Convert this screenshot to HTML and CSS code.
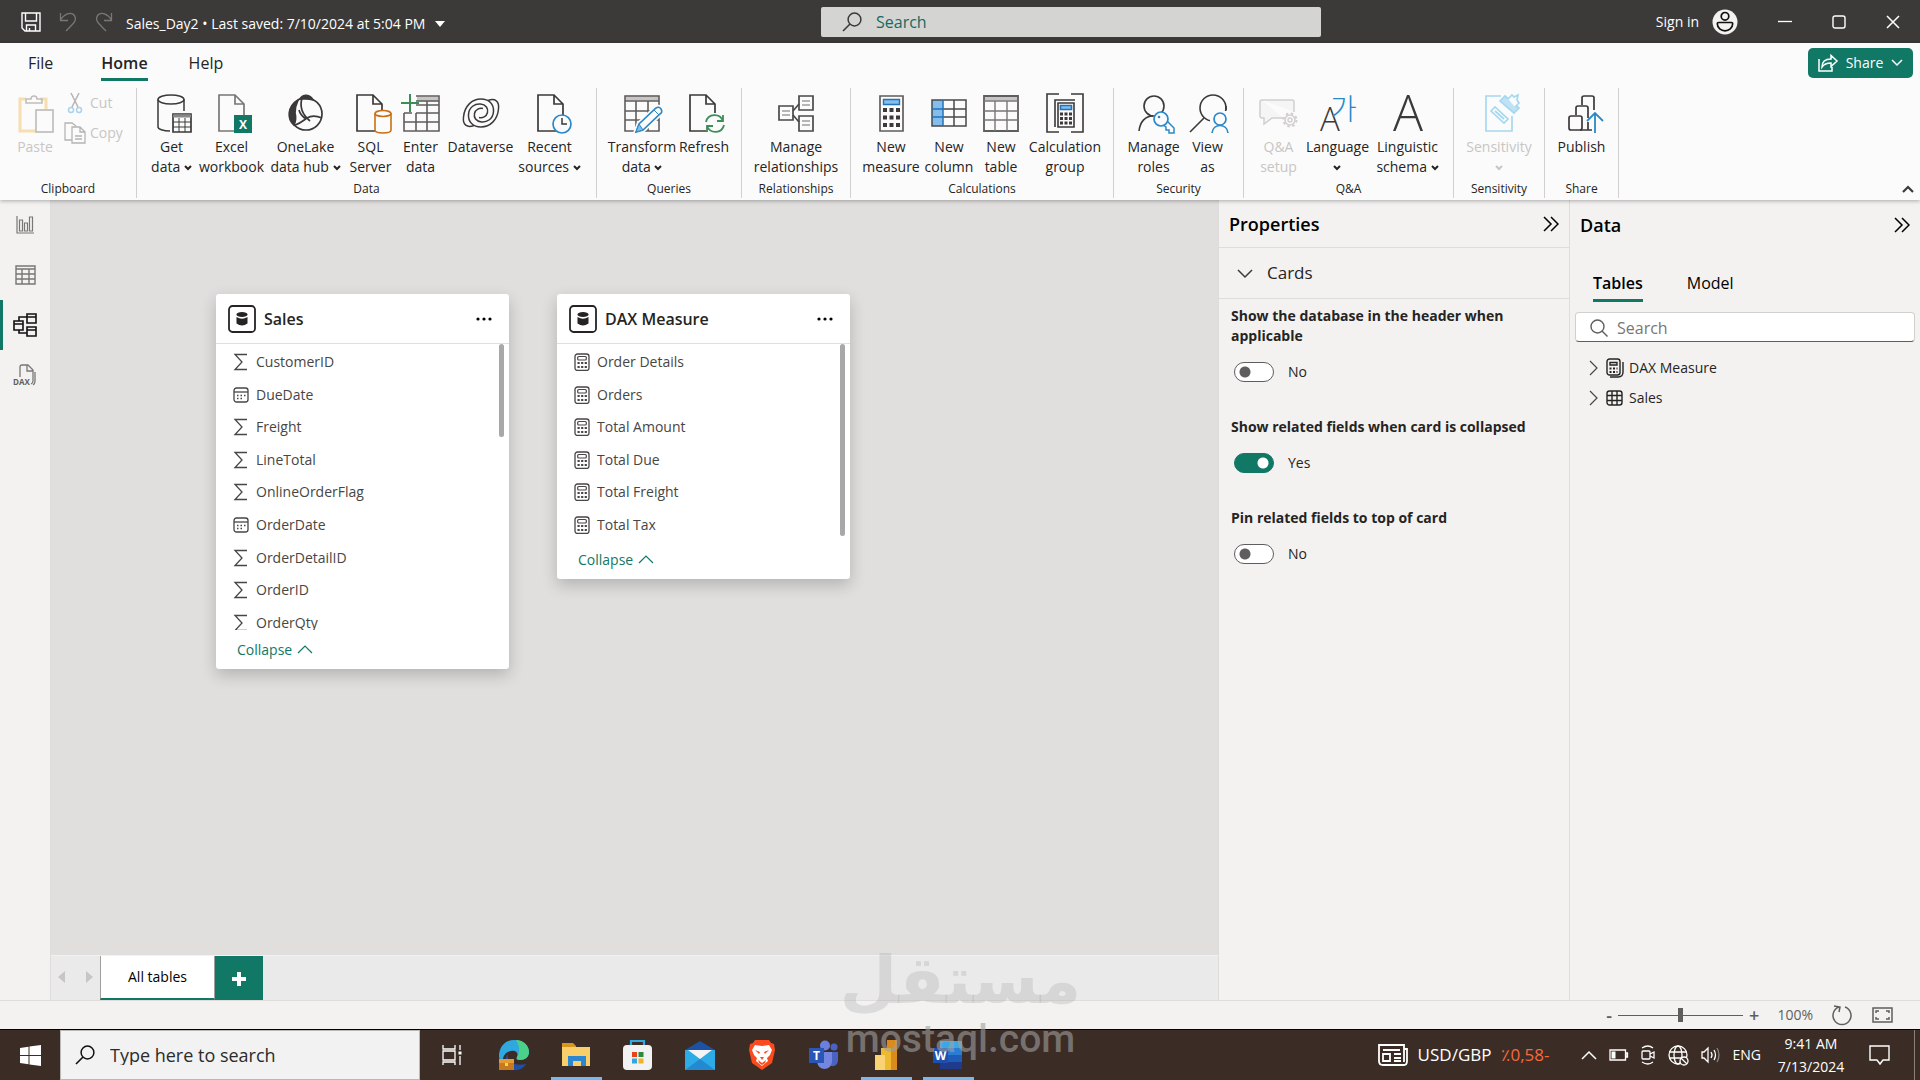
FILE: index.html
```html
<!DOCTYPE html>
<html lang="en">
<head>
  <meta charset="UTF-8" />
  <meta name="viewport" content="width=device-width, initial-scale=1.0"/>
  <title>Sales_Day2 - Power BI Desktop</title>
  <link rel="stylesheet" href="styles.css">
</head>
<body>
  <!-- shared icons -->
  <svg class="sprite" aria-hidden="true">
    <symbol id="i-down" viewBox="0 0 8 6"><path d="M1 1l3 3 3-3" fill="none" stroke="currentColor" stroke-width="2"/></symbol>
    <symbol id="i-sigma" viewBox="0 0 16 18"><path d="M14 1.500H2l7 7.500-7 7.500h12" fill="none" stroke="currentColor" stroke-width="1.300"/></symbol>
    <symbol id="i-date" viewBox="0 0 16 18">
      <rect x="1" y="2" width="14" height="14" rx="2.500" fill="none" stroke="currentColor" stroke-width="1.300"/>
      <path d="M1 6h14" stroke="currentColor" stroke-width="1.300"/>
      <path d="M4 9.500h9M4 12.500h5.500" stroke="currentColor" stroke-width="1.500" stroke-dasharray="1.500 2"/>
    </symbol>
    <symbol id="i-calc" viewBox="0 0 16 18">
      <rect x="1" y="1" width="14" height="16.500" rx="2.500" fill="none" stroke="currentColor" stroke-width="1.300"/>
      <rect x="3.700" y="3.500" width="8.600" height="3.500" rx="1" fill="none" stroke="currentColor" stroke-width="1.200"/>
      <path d="M3.500 10h10M3.500 14h10" stroke="currentColor" stroke-width="2.200" stroke-dasharray="2.200 1.400"/>
    </symbol>
    <symbol id="i-db" viewBox="0 0 28 28">
      <rect x="1" y="1" width="26" height="26" rx="3.500" fill="#fff" stroke="currentColor" stroke-width="1.800"/>
      <ellipse cx="14" cy="9.500" rx="5.500" ry="2.500" fill="currentColor"/>
      <path d="M8.500 12q5.500 3.500 11 0v6.500q-5.500 4-11 0z" fill="currentColor"/>
    </symbol>
    <symbol id="i-up" viewBox="0 0 16 9"><path d="M1 8l7-7 7 7" fill="none" stroke="currentColor" stroke-width="1.200"/></symbol>
    <symbol id="i-dots" viewBox="0 0 16 4"><circle cx="2" cy="2" r="1.600"/><circle cx="8" cy="2" r="1.600"/><circle cx="14" cy="2" r="1.600"/></symbol>
    <symbol id="i-expand" viewBox="0 0 16 16"><path d="M1 1l7 7-7 7M8 1l7 7-7 7" fill="none" stroke="currentColor" stroke-width="1.500"/></symbol>
    <symbol id="i-right" viewBox="0 0 9 16"><path d="M1 1l7 7-7 7" fill="none" stroke="currentColor" stroke-width="1.200"/></symbol>
    <symbol id="i-find" viewBox="0 0 20 20"><path d="M1 19l7-7" stroke="currentColor" stroke-width="1.600"/><circle cx="12.500" cy="7.500" r="6.400" fill="none" stroke="currentColor" stroke-width="1.500"/></symbol>
    <symbol id="i-page" viewBox="0 0 28 38"><path d="M1 1h16l9 9v27H1zM17 1v9h9" fill="#fbfbfb" stroke="currentColor" stroke-width="1.700"/></symbol>
  </svg>

  <header class="titlebar">
    <div class="title-left">
      <button class="bar-btn" aria-label="Save"><svg width="20" height="20" viewBox="0 0 20 20" fill="none" stroke="#fff" stroke-width="1.400"><path d="M1 1h18v18H4l-3-3zM4.500 1v8h11V1M5.500 19v-6h9v6M8.500 19v-3"/></svg></button>
      <button class="bar-btn dim" aria-label="Undo"><svg width="18" height="20" viewBox="0 0 18 20" fill="none" stroke="#8a8886" stroke-width="1.300"><path d="M1.500 1v7.500H9M1.500 8C5 2 12-1 15.500 3.500 18 8 16 10 7 19"/></svg></button>
      <button class="bar-btn dim" aria-label="Redo"><svg width="18" height="20" viewBox="0 0 18 20" fill="none" stroke="#8a8886" stroke-width="1.300"><path d="M16.500 1v7.500H9M16.500 8C13 2 6-1 2.500 3.500 0 8 2 10 11 19"/></svg></button>
      <button class="doc-name">Sales_Day2 • Last saved: 7/10/2024 at 5:04 PM <span class="caret"></span></button>
    </div>
    <label class="title-search">
      <svg width="20" height="20"><use href="#i-find"/></svg>
      <input type="search" placeholder="Search" aria-label="Search">
    </label>
    <div class="title-right">
      <button class="sign-in">Sign in
        <svg width="26" height="26" viewBox="0 0 26 26"><circle cx="13" cy="13" r="12.500" fill="#f3f2f1"/><g fill="none" stroke="#111" stroke-width="1.700"><circle cx="13" cy="7.300" r="3.800"/><path d="M6.500 13.500h13a1.200 1.200 0 0 1 1.200 1.200C20.500 19 17 21.800 13 21.800S5.500 19 5.300 14.700a1.200 1.200 0 0 1 1.200-1.200z"/></g></svg>
      </button>
      <button class="win-btn" aria-label="Minimize"><svg width="14" height="14" viewBox="0 0 14 14"><path d="M0 6.500h14" stroke="#fff" stroke-width="1.300"/></svg></button>
      <button class="win-btn" aria-label="Maximize"><svg width="14" height="14" viewBox="0 0 14 14"><rect x="1" y="1" width="12" height="12" rx="2" fill="none" stroke="#fff" stroke-width="1.400"/></svg></button>
      <button class="win-btn" aria-label="Close"><svg width="14" height="14" viewBox="0 0 14 14"><path d="M1 1l12 12M13 1L1 13" stroke="#fff" stroke-width="1.500"/></svg></button>
    </div>
  </header>

  <section class="ribbon">
    <nav class="menu">
      <a href="#file">File</a>
      <a href="#home" class="active">Home</a>
      <a href="#help">Help</a>
      <button class="share-btn">
        <svg width="20" height="18" viewBox="0 0 20 18" fill="none" stroke="#fff" stroke-width="1.500"><path d="M1 5v12h13v-4M4 13c0-6 4-8 9-8V1.500L19 7l-6 5.500V9c-4 0-7 1-9 4z"/></svg>
        Share
        <svg width="12" height="8" viewBox="0 0 12 8"><path d="M1 1l5 5 5-5" fill="none" stroke="#fff" stroke-width="1.500"/></svg>
      </button>
    </nav>

    <div class="groups">
      <div class="group g-clipboard">
        <div class="tools">
          <button class="tool" disabled>
            <svg viewBox="0 0 40 40" fill="none"><path d="M11 5H5v32h16M25 5h6v10" stroke="#f5deb0" stroke-width="3"/><path d="M11 9V5h5a3 3 0 0 1 6 0h5v4z" stroke="#bfbebd" stroke-width="1.600"/><rect x="21" y="16" width="17" height="22" fill="#fbfbfb" stroke="#bfbebd" stroke-width="1.700"/></svg>
            <span>Paste</span>
          </button>
          <div class="small-tools">
            <button class="small-tool" disabled>
              <svg viewBox="0 0 22 22" fill="none"><path d="M7 1l7 14M15 1L8 15" stroke="#b5b4b3" stroke-width="1.500"/><g stroke="#a9d3ec" stroke-width="1.500"><circle cx="7" cy="18" r="2.500"/><circle cx="15" cy="18" r="2.500"/></g></svg>
              Cut
            </button>
            <button class="small-tool" disabled>
              <svg viewBox="0 0 22 22" fill="none" stroke="#b5b4b3" stroke-width="1.300"><path d="M8 18H1V1h7l4 3M8 5h8l5 5v11H8zM16 5v5h5M11 14h7M11 17h7"/></svg>
              Copy
            </button>
          </div>
        </div>
        <div class="group-name">Clipboard</div>
      </div>

      <div class="group g-data">
        <div class="tools">
          <button class="tool">
            <svg viewBox="0 0 40 40" fill="none" stroke="#3b3a39" stroke-width="1.500"><path d="M6 5.500V33c0 2 5 4 12 4M32 5.500V17"/><ellipse cx="19" cy="5.500" rx="13" ry="4.500"/><path d="M21 20h18v18H21z" stroke-width="1.700"/><path d="M21 22h18" stroke="#888" stroke-width="3"/><path d="M21 28h18M21 33h18M27 24v14M33 24v14" stroke-width="1"/></svg>
            <span>Get<br>data <svg class="down"><use href="#i-down"/></svg></span>
          </button>
          <button class="tool">
            <svg viewBox="0 0 40 40"><use href="#i-page" x="6" width="28" height="38" color="#797775"/><path d="M22 21h18v18H22z" fill="#117865"/><text x="31" y="35" class="badge-letter">X</text></svg>
            <span>Excel<br>workbook</span>
          </button>
          <button class="tool">
            <svg viewBox="0 0 40 40" fill="none" stroke="#3b3a39" stroke-width="1.700"><circle cx="20" cy="20" r="16"/><path d="M14 5c3-5 10-5 13 1-5-2-9-1-13-1z" fill="#3b3a39"/><path d="M12 6C1 13 1 25 8 31c2-4 2-8 1-12 0-5 1-9 3-13z" fill="#3b3a39"/><path d="M16 4c-3 10 2 18 8 23M9 31c4-1 8-4 12-7 5-3 10-2 15 0M20 25c-3-2-6-5-7-9"/></svg>
            <span>OneLake<br>data hub <svg class="down"><use href="#i-down"/></svg></span>
          </button>
          <button class="tool">
            <svg viewBox="0 0 40 40"><use href="#i-page" x="5" width="28" height="38" color="#3b3a39"/><path d="M24 20v16c0 4 16 4 16 0V20z" fill="#fbfbfb" stroke="#ca6f15" stroke-width="1.600"/><ellipse cx="32" cy="19.500" rx="8" ry="3" fill="#fbfbfb" stroke="#ca6f15" stroke-width="1.600"/></svg>
            <span>SQL<br>Server</span>
          </button>
          <button class="tool">
            <svg viewBox="0 0 40 40" fill="none"><path d="M16 5h21" stroke="#c8c6c4" stroke-width="5"/><path d="M15 2h23v35H3V19M3 28h35M15 19h23M3 19h8M15 11h23M15 19v18M26 7v30M15 7h23" stroke="#605e5c" stroke-width="1.600"/><path d="M9 0v18M0 9h18" stroke="#3b8e57" stroke-width="2"/></svg>
            <span>Enter<br>data</span>
          </button>
          <button class="tool">
            <svg viewBox="0 0 40 40" fill="none" stroke="#3b3a39" stroke-width="1.500"><path d="M13 31.500C6 34 1.500 31 2.500 23 3.500 12 11 5 20 5c8 0 13 5 12.500 12.500C32 25 26 28.500 20.500 28 15 27.500 12.500 23.500 13.500 19.500c1-4 5-6 8.500-5"/><path d="M27 6.500C34 4 38.500 7 37.500 15 36.500 26 29 33 20 33 12 33 7 28 7.500 20.500 8 13 14 9.500 19.500 10c5.500.5 8 4.500 7 8.500-1 4-5 6-8.500 5"/></svg>
            <span>Dataverse</span>
          </button>
          <button class="tool">
            <svg viewBox="0 0 40 40"><use href="#i-page" x="7" width="28" height="38" color="#3b3a39"/><circle cx="32" cy="30" r="9" fill="#fbfbfb" stroke="#2b88c8" stroke-width="1.700"/><path d="M32 24v6h5" fill="none" stroke="#3b3a39" stroke-width="1.500"/></svg>
            <span>Recent<br>sources <svg class="down"><use href="#i-down"/></svg></span>
          </button>
        </div>
        <div class="group-name">Data</div>
      </div>

      <div class="group g-queries">
        <div class="tools">
          <button class="tool">
            <svg viewBox="0 0 40 40" fill="none"><path d="M3 4h34" stroke="#c8c6c4" stroke-width="5"/><path d="M3 2h34v35H3zM3 7h34M3 17h34M3 26h34M14 7v30M26 7v30" stroke="#605e5c" stroke-width="1.600"/><path d="M14 38l3-8 17-16q3-2 5 1t-1 5L21 36z" fill="#fbfbfb" stroke="#fbfbfb" stroke-width="5"/><path d="M14 38l3-8 17-16q3-2 5 1t-1 5L21 36z" fill="#fbfbfb" stroke="#2b88c8" stroke-width="1.600"/><path d="M14 38l3-8 4 6z" fill="#83beec" stroke="#2b88c8"/><path d="M32 16l5 5" stroke="#2b88c8"/></svg>
            <span>Transform<br>data <svg class="down"><use href="#i-down"/></svg></span>
          </button>
          <button class="tool">
            <svg viewBox="0 0 40 40" fill="none"><use href="#i-page" x="5" width="28" height="38" color="#3b3a39"/><circle cx="31" cy="30" r="11" fill="#fbfbfb"/><path d="M22 28c2-9 14-9 17-1M39 21v6h-6M40 31c-2 9-14 9-17 1M23 38v-6h6" stroke="#3b8e57" stroke-width="1.800"/></svg>
            <span>Refresh</span>
          </button>
        </div>
        <div class="group-name">Queries</div>
      </div>

      <div class="group g-relations">
        <div class="tools">
          <button class="tool">
            <svg viewBox="0 0 40 40" fill="none" stroke="#4a4948" stroke-width="1.700"><path d="M17 17l6-7M17 21l6 7"/><path d="M3 12h14v14H3zM23 2h14v14H23zM23 22h14v15H23z"/><path d="M6 17h8M6 21h8M26 7h8M26 11h8M26 27h8M26 31h8" stroke="#a19f9d" stroke-width="1.300"/></svg>
            <span>Manage<br>relationships</span>
          </button>
        </div>
        <div class="group-name">Relationships</div>
      </div>

      <div class="group g-calc">
        <div class="tools">
          <button class="tool">
            <svg viewBox="0 0 40 40" fill="none"><path d="M9 2h23v35H9z" stroke="#605e5c" stroke-width="1.700"/><path d="M12.500 5.500h16v5h-16z" fill="#83beec" stroke="#2472b8" stroke-width="1.400"/><path d="M12 16h17M12 23.500h17M12 31h17" stroke="#3b3a39" stroke-width="4" stroke-dasharray="4 2.500"/></svg>
            <span>New<br>measure</span>
          </button>
          <button class="tool">
            <svg viewBox="0 0 40 40" fill="none"><path d="M3 6h11v26H3z" fill="#83beec"/><path d="M3 6h34v26H3zM14 15h23M14 23h23M25 6v26" stroke="#4a4948" stroke-width="1.500"/><path d="M3 15h11M3 23h11M14 6v26" stroke="#2472b8" stroke-width="1.500"/></svg>
            <span>New<br>column</span>
          </button>
          <button class="tool">
            <svg viewBox="0 0 40 40" fill="none"><path d="M3 4h34" stroke="#c8c6c4" stroke-width="5"/><path d="M3 2h34v35H3z" stroke="#605e5c" stroke-width="1.800"/><path d="M3 7h34M3 17h34M3 26h34M14 7v30M26 7v30" stroke="#797775" stroke-width="1.400"/></svg>
            <span>New<br>table</span>
          </button>
          <button class="tool">
            <svg viewBox="0 0 40 40" fill="none" stroke="#3b3a39" stroke-width="1.600"><path d="M14 0H2v38h12M26 0h12v38H26"/><path d="M10 33V6h20M13 9h16v24H13z"/><path d="M15.500 11.500h11v4h-11z" fill="#83beec" stroke="#2472b8"/><path d="M15 20h13M15 24.500h13M15 29h13" stroke-width="3" stroke-dasharray="3 1.500"/></svg>
            <span>Calculation<br>group</span>
          </button>
        </div>
        <div class="group-name">Calculations</div>
      </div>

      <div class="group g-security">
        <div class="tools">
          <button class="tool">
            <svg viewBox="0 0 40 40" fill="none"><g stroke="#3b3a39" stroke-width="1.600"><circle cx="20" cy="12" r="10"/><path d="M5 37c1-9 6-15 14-15"/></g><path d="M33 27l7 7v5h-5v-3h-3v-3l-4-3z" fill="#fbfbfb" stroke="#2b88c8" stroke-width="1.500"/><circle cx="27" cy="25" r="7" fill="#fbfbfb" stroke="#2b88c8" stroke-width="1.700"/><circle cx="25" cy="23" r="1.300" fill="#2b88c8"/></svg>
            <span>Manage<br>roles</span>
          </button>
          <button class="tool">
            <svg viewBox="0 0 40 40" fill="none"><g stroke="#3b3a39" stroke-width="1.600"><circle cx="25" cy="14" r="13"/><path d="M2 38l14-14"/></g><path d="M22 39V17h17v22z" fill="#fbfbfb"/><path d="M38 12v4" stroke="#3b3a39" stroke-width="1.600"/><g stroke="#2b88c8" stroke-width="1.700"><circle cx="32" cy="25" r="6"/><path d="M24 39c1-10 15-10 16 0"/></g></svg>
            <span>View<br>as</span>
          </button>
        </div>
        <div class="group-name">Security</div>
      </div>

      <div class="group g-qa">
        <div class="tools">
          <button class="tool" disabled>
            <svg viewBox="0 0 40 40" fill="none" stroke="#d2d0ce" stroke-width="1.500"><path d="M3 6h30a2 2 0 0 1 2 2v10M24 24H13l-8 6v-6H3a2 2 0 0 1-2-2V8a2 2 0 0 1 2-2" fill="#f5f5f5"/><circle cx="31" cy="26" r="5" fill="#fbfbfb"/><circle cx="31" cy="26" r="2"/><circle cx="31" cy="26" r="6.500" stroke-width="2" stroke-dasharray="2.500 2.600"/></svg>
            <span>Q&amp;A<br>setup</span>
          </button>
          <button class="tool">
            <svg viewBox="0 0 40 40"><text x="2" y="37" class="thin-a">A</text><text x="12" y="26" class="thin-ko">가</text></svg>
            <span>Language<br><svg class="down"><use href="#i-down"/></svg></span>
          </button>
          <button class="tool">
            <svg viewBox="0 0 40 40"><text x="20" y="37" class="big-a">A</text></svg>
            <span>Linguistic<br>schema <svg class="down"><use href="#i-down"/></svg></span>
          </button>
        </div>
        <div class="group-name">Q&amp;A</div>
      </div>

      <div class="group g-sens">
        <div class="tools">
          <button class="tool" disabled>
            <svg viewBox="0 0 40 40" fill="none" stroke="#a5d8f0" stroke-width="1.700"><path d="M22 2H7v35h26V22"/><path d="M12 17l4-4 13 12-4 4zM16 17l9 8"/><path d="M21 7l5-5 14 12-5 5z" fill="#bfe3f5"/><path d="M29 5l4-4 2 2 4-2-1 5 2 3-4 4" fill="#fbfbfb"/></svg>
            <span>Sensitivity<br><svg class="down"><use href="#i-down"/></svg></span>
          </button>
        </div>
        <div class="group-name">Sensitivity</div>
      </div>

      <div class="group g-share">
        <div class="tools">
          <button class="tool">
            <svg viewBox="0 0 40 40" fill="none"><g stroke="#3b3a39" stroke-width="1.700"><rect x="7" y="22" width="13" height="14" rx="2"/><path d="M14 21v-7q0-2 2-2h8q2 0 2 2v10M20 11V4q0-2 2-2h8q2 0 2 2v12M18 36h12M26 28v8"/></g><path d="M33 39V19M25 27l8-8 8 8" stroke="#2b88c8" stroke-width="1.800"/></svg>
            <span>Publish</span>
          </button>
        </div>
        <div class="group-name">Share</div>
      </div>
      <button class="fold" aria-label="Collapse the ribbon"><svg width="12" height="8" viewBox="0 0 12 8"><path d="M1 7l5-5 5 5" fill="none" stroke="#3b3a39" stroke-width="2.200"/></svg></button>
    </div>
  </section>

  <main class="workspace">
    <nav class="rail">
      <a href="#report" aria-label="Report view"><svg width="18" height="20" viewBox="0 0 18 20" fill="none" stroke="#797775" stroke-width="1.200"><path d="M1 1v17h17M3.500 5h3v11h-3zM8.500 8h3v8h-3zM13.500 2h3v14h-3z"/></svg></a>
      <a href="#table" aria-label="Table view"><svg width="21" height="20" viewBox="0 0 21 20" fill="none" stroke="#797775" stroke-width="1.400"><path d="M1 1h19v18H1zM1 4h19M1 9h19M1 14h19M7 4v15M14 4v15"/></svg></a>
      <a href="#model" aria-label="Model view" class="active"><svg width="24" height="24" viewBox="0 0 24 24" fill="none" stroke="#111" stroke-width="1.600"><path d="M14 1h9v9h-9zM1 8h9v9H1zM14 14h9v9h-9zM14 4h9M1 11h9M14 17h9M6 8V4h8M6 17v3h8"/></svg></a>
      <a href="#dax" aria-label="DAX query view"><svg width="24" height="24" viewBox="0 0 24 24" fill="none" stroke="#797775" stroke-width="1.300"><path d="M7 14V4q0-2 2-2h6l5 5v11q0 2-2 3M14 2v6h6M22 9v9q0 3-2 4"/><text x="0" y="22" class="dax-text">DAX</text></svg></a>
    </nav>

    <div class="center">
      <div class="canvas">
        <article class="card card-sales">
          <header><svg class="db"><use href="#i-db"/></svg><h2>Sales</h2><button class="more" aria-label="More options"><svg width="16" height="4"><use href="#i-dots"/></svg></button></header>
          <div class="fields">
            <ul>
              <li><svg><use href="#i-sigma"/></svg>CustomerID</li>
              <li><svg><use href="#i-date"/></svg>DueDate</li>
              <li><svg><use href="#i-sigma"/></svg>Freight</li>
              <li><svg><use href="#i-sigma"/></svg>LineTotal</li>
              <li><svg><use href="#i-sigma"/></svg>OnlineOrderFlag</li>
              <li><svg><use href="#i-date"/></svg>OrderDate</li>
              <li><svg><use href="#i-sigma"/></svg>OrderDetailID</li>
              <li><svg><use href="#i-sigma"/></svg>OrderID</li>
              <li><svg><use href="#i-sigma"/></svg>OrderQty</li>
            </ul>
            <span class="thumb"></span>
          </div>
          <button class="collapse">Collapse <svg width="16" height="9"><use href="#i-up"/></svg></button>
        </article>

        <article class="card card-dax">
          <header><svg class="db"><use href="#i-db"/></svg><h2>DAX Measure</h2><button class="more" aria-label="More options"><svg width="16" height="4"><use href="#i-dots"/></svg></button></header>
          <div class="fields">
            <ul>
              <li><svg><use href="#i-calc"/></svg>Order Details</li>
              <li><svg><use href="#i-calc"/></svg>Orders</li>
              <li><svg><use href="#i-calc"/></svg>Total Amount</li>
              <li><svg><use href="#i-calc"/></svg>Total Due</li>
              <li><svg><use href="#i-calc"/></svg>Total Freight</li>
              <li><svg><use href="#i-calc"/></svg>Total Tax</li>
            </ul>
            <span class="thumb"></span>
          </div>
          <button class="collapse">Collapse <svg width="16" height="9"><use href="#i-up"/></svg></button>
        </article>
      </div>
      <div class="sheets">
        <button class="step prev" aria-label="Previous"></button>
        <button class="step next" aria-label="Next"></button>
        <button class="sheet">All tables</button>
        <button class="add" aria-label="New page"><svg width="14" height="14" viewBox="0 0 14 14"><path d="M7 0v14M0 7h14" stroke="#fff" stroke-width="4"/></svg></button>
      </div>
    </div>

    <aside class="panel">
      <header class="panel-head lined"><h2>Properties</h2><button aria-label="Collapse pane"><svg width="16" height="16"><use href="#i-expand"/></svg></button></header>
      <button class="section-head"><svg width="16" height="9" viewBox="0 0 16 9"><path d="M1 1l7 7 7-7" fill="none" stroke="#3b3a39" stroke-width="1.500"/></svg>Cards</button>
      <div class="option">
        <label for="showDb">Show the database in the header when applicable</label>
        <div class="switch-row"><input type="checkbox" id="showDb" class="switch"><span>No</span></div>
      </div>
      <div class="option">
        <label for="showRelated">Show related fields when card is collapsed</label>
        <div class="switch-row"><input type="checkbox" id="showRelated" class="switch" checked><span>Yes</span></div>
      </div>
      <div class="option">
        <label for="pinRelated">Pin related fields to top of card</label>
        <div class="switch-row"><input type="checkbox" id="pinRelated" class="switch"><span>No</span></div>
      </div>
    </aside>

    <aside class="panel">
      <header class="panel-head"><h2>Data</h2><button aria-label="Collapse pane"><svg width="16" height="16"><use href="#i-expand"/></svg></button></header>
      <nav class="data-tabs"><a href="#tables" class="active">Tables</a><a href="#datamodel">Model</a></nav>
      <label class="data-search">
        <svg width="18" height="18" viewBox="0 0 18 18" fill="none" stroke="#605e5c" stroke-width="1.400"><circle cx="7.500" cy="7.500" r="6.500"/><path d="M12 12l5.500 5.500"/></svg>
        <input type="search" placeholder="Search" aria-label="Search data">
      </label>
      <ul class="tree">
        <li><svg class="twist" width="9" height="16"><use href="#i-right"/></svg><svg width="18" height="20" viewBox="0 0 18 20" fill="none" stroke="#252423" stroke-width="1.400"><rect x="1" y="1" width="13" height="16" rx="2.500"/><path d="M4 19h8q5 0 5-5V4M4 4.500h7v2.500H4z"/><path d="M3.500 10.500h8M3.500 14h8" stroke-width="2" stroke-dasharray="2 1.500"/></svg>DAX Measure</li>
        <li><svg class="twist" width="9" height="16"><use href="#i-right"/></svg><svg width="18" height="20" viewBox="0 0 18 20" fill="none" stroke="#252423" stroke-width="1.400"><rect x="1" y="3" width="15" height="14" rx="2.500"/><path d="M6 3v14M11 3v14M1 7.500h15M1 12.500h15"/></svg>Sales</li>
      </ul>
    </aside>
  </main>

  <footer class="status">
    <span class="sign">-</span>
    <input type="range" min="10" max="190" value="100" class="zoom" aria-label="Zoom">
    <span class="sign">+</span>
    <span class="zoom-value">100%</span>
    <button aria-label="Reset zoom"><svg width="21" height="22" viewBox="0 0 21 22" fill="none" stroke="#605e5c" stroke-width="1.500"><path d="M13 3a9 9 0 1 1-6 0M2 2l6 1-1 5"/></svg></button>
    <button aria-label="Fit to page"><svg width="21" height="16" viewBox="0 0 21 16" fill="none" stroke="#605e5c" stroke-width="1.500"><path d="M1 1h19v14H1zM4 6V4h3M14 4h3v2M17 10v2h-3M7 12H4v-2"/></svg></button>
  </footer>

  <footer class="taskbar">
    <button class="start" aria-label="Start"><svg width="21" height="21" viewBox="0 0 21 21"><path d="M0 3l8.500-1.200V10H0zM9.500 1.600L21 0v10H9.500zM0 11h8.500v8.200L0 18zM9.500 11H21v10L9.500 19.400z" fill="#fff"/></svg></button>
    <label class="task-search">
      <svg width="20" height="20"><use href="#i-find"/></svg>
      <input type="search" placeholder="Type here to search" aria-label="Type here to search">
    </label>
    <div class="apps">
      <button class="app" aria-label="Task view"><svg width="20" height="20" viewBox="0 0 20 20" fill="none" stroke="#fff" stroke-width="1.300"><path d="M1 0v4h12V0M1 6h12v9H1zM1 20v-3h12v3M18 0v5M18 11v9"/><path d="M16.500 6.500h3v3h-3z" fill="#fff" stroke="none"/></svg></button>
      <button class="app" aria-label="Edge"><svg width="32" height="32" viewBox="0 0 32 32"><path d="M1 17C1 8 7 1 16 1s15 6 15 12c0 5-4 8-9 8-3 0-4-1-3-3 2-5-2-7-6-6-6 1-9 6-8 12-3-2-4-4-4-7z" fill="#2fa8e0"/><path d="M18 1c8 0 13 6 13 12 0 5-4 8-9 8-3 0-4-1-3-3 4-6 2-12-1-17z" fill="#4bd08a"/><path d="M10 14c-2 8 5 14 18 11-3 5-8 7-13 6-7-1-10-8-5-17z" fill="#1f4fa8"/><path d="M1 20h15v11H1z" fill="#c8781e"/><path d="M1 20h15v4H1z" fill="#e49a33"/><path d="M7 24h3v3H7z" fill="#f8d34a"/></svg></button>
      <button class="app running" aria-label="File Explorer"><svg width="32" height="32" viewBox="0 0 32 32"><path d="M2 4h11l3 3v6H2z" fill="#d9961c"/><path d="M2 8h28v19H2z" fill="#f9cf6b"/><path d="M8 17h18v10h-5v-5h-8v5H8z" fill="#2b88d0"/></svg></button>
      <button class="app" aria-label="Microsoft Store"><svg width="32" height="32" viewBox="0 0 32 32"><path d="M9 7V2h13v5" fill="none" stroke="#31a8e0" stroke-width="2.200"/><rect x="1" y="6" width="29" height="25" rx="4" fill="#f2f2f2"/><path d="M10 13h5v5h-5z" fill="#e8421c"/><path d="M16.500 13h5v5h-5z" fill="#2b8a3c"/><path d="M10 19.500h5v5h-5z" fill="#2fa8e0"/><path d="M16.500 19.500h5v5h-5z" fill="#efb32a"/></svg></button>
      <button class="app" aria-label="Mail"><svg width="32" height="32" viewBox="0 0 32 32"><path d="M1 11L16 2l15 9z" fill="#1d51a3"/><path d="M1 11h30v20H1z" fill="#2cabe6"/><path d="M4 11h24L16 20z" fill="#f4f4f4"/><path d="M1 31l15-11 15 11z" fill="#2389d0"/></svg></button>
      <button class="app" aria-label="Brave"><svg width="32" height="32" viewBox="0 0 32 32"><path d="M9 1h14l2 3 3 1 1 6-3 13-10 7-10-7L3 11l1-6 3-1z" fill="#fb4a1d"/><path d="M9 6l7 1 7-1 3 5-2 5-3 3 1 3-6 5-6-5 1-3-3-3-2-5z" fill="#fff"/><path d="M9 11l5 2-1 2zM23 11l-5 2 1 2zM14 18h4l-2 3zM12 21l4 3 4-3-1 3-3 2-3-2z" fill="#fb4a1d"/></svg></button>
      <button class="app" aria-label="Teams"><svg width="32" height="32" viewBox="0 0 32 32"><circle cx="17" cy="6.500" r="5" fill="#6b7fdc"/><circle cx="26" cy="8" r="3.500" fill="#4a62c4"/><path d="M20 13h10v9q-1 6-7 5z" fill="#4a62c4"/><path d="M9 13h15v10q-1 7-8 7-6-1-7-7z" fill="#7486e0"/><path d="M1 9h15v15H1z" fill="#2a56b8"/><text x="8.500" y="21" class="app-letter">T</text></svg></button>
      <button class="app running" aria-label="Power BI"><svg width="32" height="32" viewBox="0 0 32 32"><path d="M17 1h10v30H17z" fill="#d98c1c"/><path d="M11 9h10v22H11z" fill="#edb92e"/><path d="M5 16h10v15H5z" fill="#f8d273"/></svg></button>
      <button class="app running" aria-label="Word"><svg width="32" height="32" viewBox="0 0 32 32"><path d="M8 2h22v8H8z" fill="#39a8ea"/><path d="M8 9h22v7H8z" fill="#2b7cd3"/><path d="M8 16h22v8H8z" fill="#1d5cb8"/><path d="M8 23h22v7H8z" fill="#203a8c"/><path d="M1 9h15v15H1z" fill="#1f4fae"/><text x="8.500" y="21" class="app-letter">W</text></svg></button>
    </div>

    <div class="tray">
      <button class="news">
        <svg width="30" height="22" viewBox="0 0 30 22" fill="none" stroke="#fff" stroke-width="1.800"><path d="M26 4V1H1v16q0 4 4 4h21q3 0 3-4V5h-3v13M5 6h17M16 10h7M16 14h7M16 17h7M5 10h7v7H5z"/></svg>
        USD/GBP <b dir="ltr">٪0,58-</b>
      </button>
      <svg width="16" height="10" viewBox="0 0 16 10"><path d="M1 9l7-7 7 7" fill="none" stroke="#fff" stroke-width="1.500"/></svg>
      <svg width="19" height="12" viewBox="0 0 19 12"><path d="M1 1h15.500v10H1zM17 4h1.500v4H17z" fill="none" stroke="#fff" stroke-width="1.300"/><path d="M2.500 2.500h4v7h-4z" fill="#fff"/></svg>
      <svg width="16" height="20" viewBox="0 0 16 20" fill="none" stroke="#fff" stroke-width="1.300"><rect x="2" y="6" width="8" height="8" rx="1"/><path d="M10 9l4-2v6l-4-2M2 3q6-4 11 0M2 17q6 4 11 0"/></svg>
      <svg width="21" height="21" viewBox="0 0 21 21" fill="none" stroke="#fff" stroke-width="1.300"><circle cx="10" cy="10" r="9"/><ellipse cx="10" cy="10" rx="4" ry="9"/><path d="M1 7h18M1 13h18"/><circle cx="16" cy="16" r="4" fill="#3b2d26"/><path d="M13 13l6 6"/></svg>
      <svg width="20" height="18" viewBox="0 0 20 18" fill="none" stroke="#fff" stroke-width="1.300"><path d="M1 6h2l4-4v14l-4-4H1zM10 6q2 3 0 6M13 4q3 5 0 10"/><path d="M16 2q4 7 0 14" stroke="#8a827d"/></svg>
      <span class="lang">ENG</span>
      <time>9:41 AM<br>7/13/2024</time>
      <button class="notify" aria-label="Notifications"><svg width="21" height="20" viewBox="0 0 21 20"><path d="M1 1h19v14h-6l-3 4-3-4H1z" fill="none" stroke="#fff" stroke-width="1.400"/></svg></button>
    </div>
  </footer>

  <div class="watermark"><span lang="ar">مستقل</span><small>mostaql.com</small></div>
</body>
</html>
```
FILE: styles.css
```css
* { box-sizing: border-box; }

body {
  margin: 0;
  height: 100vh;
  display: flex; flex-direction: column;
  font-family: "Open Sans", "Noto Sans", sans-serif;
  font-size: 14px; line-height: 20px;
  color: #252423;
  background: #f3f2f1;
  overflow: hidden;
}

button, input {
  font: inherit; color: inherit;
  background: none; border: none;
  padding: 0; margin: 0;
}
input { outline: none; min-width: 0; }
a { color: inherit; text-decoration: none; }
ul { list-style: none; margin: 0; padding: 0; }
h2 { margin: 0; font-weight: 600; }
svg { flex: none; overflow: visible; }
.sprite { position: absolute; width: 0; height: 0; }

/* title bar */
.titlebar {
  flex: none; height: 43px;
  display: grid; grid-template-columns: 821fr 500px 599fr;
  align-items: center;
  background: #3b3a39; color: #fff;
}
.title-left { display: flex; align-items: center; padding-left: 21px; gap: 18px; }
.bar-btn { display: flex; }
.bar-btn.dim { opacity: .8; }
.doc-name { display: flex; align-items: center; gap: 10px; padding-top: 5px; margin-left: -5px; white-space: nowrap; }
.caret { border: 5px solid transparent; border-top: 6px solid #fff; border-bottom: 0; }
.title-search {
  height: 30px; padding-left: 21px;
  display: flex; align-items: center; gap: 14px;
  background: #d4d4d2; border-radius: 2px; color: #3b3a39;
}
.title-search input { flex: 1; font-size: 16px; }
.title-search input::placeholder { color: #19695f; opacity: 1; }
.title-right { display: flex; align-items: center; justify-content: flex-end; padding-right: 20px; gap: 40px; }
.sign-in { display: flex; align-items: center; gap: 13px; }
.win-btn { display: flex; }

/* ribbon */
.ribbon {
  flex: none; height: 157px;
  background: #fbfbfb;
  position: relative; z-index: 1;
  box-shadow: 0 1px 4px rgba(0,0,0,0.3);
}
.menu { height: 45px; display: flex; align-items: flex-start; padding: 5px 7px 0 28px; font-size: 16px; }
.menu a { height: 33px; line-height: 30px; margin-right: 41px; }
.menu a.active { font-weight: 600; border-bottom: 3px solid #117865; }
.menu a:first-child { margin-right: 48px; }
.share-btn {
  margin-left: auto;
  width: 105px; height: 30px;
  display: flex; align-items: center; justify-content: center; gap: 8px;
  background: #117865; color: #fff;
  border-radius: 5px; font-size: 14px;
}

.groups { display: flex; height: 110px; }
.group { display: flex; flex-direction: column; border-right: 1px solid #d2d0ce; }
.tools { display: grid; grid-auto-flow: column; justify-content: center; height: 92px; padding-top: 6px; }
.tool { display: flex; flex-direction: column; align-items: center; justify-content: flex-start; text-align: center; }
.tool > svg { width: 40px; height: 40px; margin-bottom: 3px; }
.tool span { white-space: nowrap; }
.tool:disabled, .small-tool:disabled { color: #c8c6c4; }
.tool .down { width: 8px; height: 6px; vertical-align: 1px; }
.small-tools { display: flex; flex-direction: column; gap: 8px; margin-top: -2px; }
.small-tool { display: flex; align-items: center; gap: 4px; height: 22px; }
.small-tool svg { width: 22px; height: 22px; }
.group-name { text-align: center; font-size: 12px; line-height: 18px; padding-top: 3px; }

.g-clipboard { width: 137px; }
.g-clipboard .tools { grid-template-columns: 58px 66px; }
.g-data { width: 460px; }
.g-data .tools { grid-template-columns: 52px 68px 80px 50px 50px 70px 68px; padding-right: 4px; }
.g-queries { width: 145px; }
.g-queries .tools { grid-template-columns: 68px 56px; padding-left: 2px; }
.g-relations { width: 109px; }
.g-calc { width: 263px; }
.g-calc .tools { grid-template-columns: 58px 58px 46px 82px; padding-left: 4px; }
.g-security { width: 130px; }
.g-security .tools { grid-template-columns: 58px 50px; }
.g-qa { width: 210px; }
.g-qa .tools { grid-template-columns: 46px 72px 68px; }
.g-sens { width: 91px; }
.g-share { width: 74px; }
.fold { margin: auto 6px 0 auto; }

.badge-letter, .app-letter { font-size: 12px; font-weight: 700; fill: #fff; text-anchor: middle; }
.thin-a { font-size: 33px; font-weight: 300; fill: #3b3a39; }
.thin-ko { font-family: "Noto Sans CJK KR", sans-serif; font-size: 29px; font-weight: 300; fill: #2b88c8; }
.big-a { font-size: 50px; font-weight: 300; fill: #3b3a39; text-anchor: middle; }
.dax-text { font-size: 8px; font-weight: 700; fill: #605e5c; stroke: none; }

/* workspace */
.workspace { flex: 1; min-height: 0; display: flex; }
.rail { flex: none; width: 50px; }
.rail a { height: 50px; display: flex; align-items: center; justify-content: center; }
.rail a.active { box-shadow: inset 3px 0 #117865; }
.center { flex: 1; display: flex; flex-direction: column; min-width: 0; border-left: 1px solid #dedddb; }
.canvas { flex: 1; position: relative; background: #e0dfde; }

.card {
  position: absolute; top: 94px; width: 293px;
  background: #fff; border-radius: 3px;
  box-shadow: 0 6px 16px rgba(0,0,0,0.2);
}
.card-sales { left: 165px; }
.card-dax { left: 506px; }
.card header {
  height: 50px; padding: 0 17px 0 12px;
  display: flex; align-items: center; gap: 8px;
  border-bottom: 1px solid #e1dfdd;
}
.card h2 { flex: 1; font-size: 16px; }
.more { display: flex; }
.db { width: 28px; height: 28px; }
.fields { position: relative; padding-top: 2px; overflow: hidden; }
.fields ul { display: grid; grid-auto-rows: 1fr; }
.fields li { display: flex; align-items: center; gap: 7px; padding-left: 17px; color: #484644; }
.fields li svg { width: 16px; height: 18px; }
.card-sales .fields { height: 286px; }
.card-sales ul { height: 293px; }
.card-dax .fields { height: 196px; }
.card-dax ul { height: 195px; }
.thumb { position: absolute; top: 0; right: 5px; width: 5px; height: 192px; border-radius: 3px; background: #a8a8a8; }
.card-sales .thumb { height: 93px; }
.collapse { display: flex; align-items: center; gap: 5px; height: 39px; padding-left: 21px; color: #117865; }

.sheets { flex: none; height: 45px; display: flex; background: #eaeaea; border-top: 1px solid #f3f2f1; padding-left: 7px; }
.step { width: 7px; height: 12px; margin: 15px 21px 0 0; background: #c8c6c4; }
.prev { clip-path: polygon(100% 0, 100% 100%, 0 50%); }
.next { clip-path: polygon(0 0, 100% 50%, 0 100%); margin-right: 7px; }
.sheet { width: 115px; background: #fff; color: #000; border-left: 1px solid #a19f9d; border-right: 1px solid #a19f9d; border-bottom: 2px solid #117865; }
.add { width: 48px; background: #117865; }
.add svg { vertical-align: middle; }

/* side panes */
.panel { flex: none; width: 351px; border-left: 1px solid #dedddb; }
.panel-head { height: 48px; padding: 1px 10px 0; display: flex; align-items: center; justify-content: space-between; color: #000; }
.panel-head.lined { border-bottom: 1px solid #dedddb; }
.panel-head h2 { font-size: 18px; }
.panel-head button { display: flex; }
.section-head {
  width: 100%; height: 51px; padding-left: 18px; margin-bottom: 7px;
  display: flex; align-items: center; gap: 14px;
  border-bottom: 1px solid #dedddb; font-size: 17px;
}
.option { padding: 0 12px; margin-bottom: 35px; }
.option label { display: block; font-weight: 700; }
.switch-row { display: flex; align-items: center; gap: 14px; margin-top: 16px; padding-left: 3px; }
.switch {
  appearance: none; width: 40px; height: 20px;
  border: 1px solid #605e5c; border-radius: 10px;
  background: #fff radial-gradient(circle at 10px 9px, #605e5c 5px, transparent 6px);
}
.switch:checked { border-color: #117865; background: #117865 radial-gradient(circle at 28px 9px, #fff 5px, transparent 6px); }

.data-tabs { display: flex; gap: 44px; padding: 20px 0 0 23px; font-size: 16px; color: #000; }
.data-tabs a { height: 34px; line-height: 30px; }
.data-tabs .active { font-weight: 600; border-bottom: 3px solid #117865; }
.data-search {
  height: 30px; margin: 10px 5px 11px; padding: 1px 0 0 14px;
  display: flex; align-items: center; gap: 9px;
  background: #fff; border: 1px solid #d2d0ce; border-bottom-color: #605e5c; border-radius: 4px;
}
.data-search input { flex: 1; font-size: 16px; }
.data-search input::placeholder { color: #797775; opacity: 1; }
.tree li { height: 30px; display: flex; align-items: center; gap: 5px; padding-left: 19px; }
.twist { color: #484644; margin-right: 3px; }

/* status bar */
.status {
  flex: none; height: 29px;
  display: flex; align-items: center; justify-content: flex-end;
  padding-right: 27px;
  border-top: 1px solid #dedddb; color: #605e5c;
}
.sign { font-size: 18px; font-weight: 600; }
.zoom { appearance: none; width: 125px; height: 20px; margin: 0 6px; background: linear-gradient(#605e5c, #605e5c) center / 100% 1px no-repeat; }
.zoom::-webkit-slider-thumb { appearance: none; width: 5px; height: 14px; background: #605e5c; }
.zoom-value { margin-left: 18px; }
.status button { display: flex; margin-left: 19px; }

/* taskbar */
.taskbar { flex: none; height: 51px; display: flex; background: #3b2d26; border-top: 1px solid #000; color: #fff; }
.start { width: 60px; }
.start svg { vertical-align: middle; }
.task-search {
  width: 360px; padding-left: 14px;
  display: flex; align-items: center; gap: 15px;
  background: #f2f2f2; border: 1px solid #b9b8b7; color: #111;
}
.task-search input { flex: 1; font-size: 18px; }
.task-search input::placeholder { color: #2b2b2b; opacity: 1; }
.apps { display: flex; padding-left: 1px; }
.app { width: 62px; display: flex; align-items: center; justify-content: center; }
.app.running { background: linear-gradient(#76b9ed, #76b9ed) bottom / 51px 3px no-repeat; }
.tray { margin-left: auto; display: flex; align-items: center; gap: 12px; padding-right: 5px; }
.news { display: flex; align-items: center; gap: 10px; font-size: 17px; margin-right: 19px; }
.news b { font-weight: 400; color: #f7693c; }
.tray time { text-align: center; line-height: 23px; width: 76px; }
.notify { display: flex; align-self: stretch; align-items: center; padding: 0 24px 0 8px; border-right: 1px solid #8a827d; }

.watermark {
  position: absolute; left: 845px; bottom: 21px; width: 231px;
  display: flex; flex-direction: column; align-items: center;
  z-index: 2; pointer-events: none;
  color: rgba(160,160,160,0.28);
}
.watermark span { font-family: "DejaVu Sans", sans-serif; font-weight: 700; font-size: 66px; line-height: 76px; }
.watermark small { font-family: Roboto, sans-serif; font-weight: 500; font-size: 39px; line-height: 40px; color: rgba(160,160,160,0.6); }
```
